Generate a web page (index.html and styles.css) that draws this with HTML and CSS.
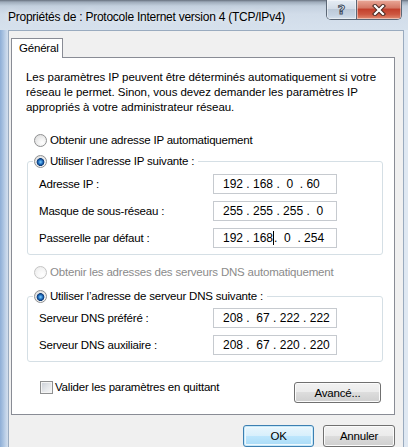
FILE: index.html
```html
<!DOCTYPE html>
<html lang="fr">
<head>
<meta charset="utf-8">
<title>Propriétés de : Protocole Internet version 4 (TCP/IPv4)</title>
<link rel="stylesheet" href="styles.css">
</head>
<body>
<div class="window">
  <div class="titlebar">
    <span class="title">Propriétés de : Protocole Internet version 4 (TCP/IPv4)</span>
    <div class="caption-btns">
      <span class="cap help">?</span>
      <span class="cap close">
        <svg width="16" height="12" viewBox="0 0 16 12">
          <path d="M4 2 L12 10 M12 2 L4 10" stroke="#4a2a22" stroke-width="4.2" stroke-linecap="square" fill="none"/>
          <path d="M4 2 L12 10 M12 2 L4 10" stroke="#ffffff" stroke-width="2.2" stroke-linecap="square" fill="none"/>
        </svg>
      </span>
    </div>
  </div>
  <div class="client">
    <div class="tabs"><div class="tab">Général</div></div>
    <div class="panel">
      <p class="intro">Les paramètres IP peuvent être déterminés automatiquement si votre<br>réseau le permet. Sinon, vous devez demander les paramètres IP<br>appropriés à votre administrateur réseau.</p>

      <div class="radio-row first"><span class="radio"></span>Obtenir une adresse IP automatiquement</div>
      <fieldset class="group">
        <legend><span class="radio checked"></span>Utiliser l’adresse IP suivante :</legend>
        <div class="field-row"><span class="label">Adresse IP :</span><span class="ip">192 . 168 .  0  . 60</span></div>
        <div class="field-row"><span class="label">Masque de sous-réseau :</span><span class="ip">255 . 255 . 255 .  0</span></div>
        <div class="field-row"><span class="label">Passerelle par défaut :</span><span class="ip">192 . 168<span class="caret"></span>.  0  . 254</span></div>
      </fieldset>

      <div class="radio-row second disabled"><span class="radio"></span>Obtenir les adresses des serveurs DNS automatiquement</div>
      <fieldset class="group dns">
        <legend><span class="radio checked"></span>Utiliser l’adresse de serveur DNS suivante :</legend>
        <div class="field-row"><span class="label">Serveur DNS préféré :</span><span class="ip">208 .  67 . 222 . 222</span></div>
        <div class="field-row"><span class="label">Serveur DNS auxiliaire :</span><span class="ip">208 .  67 . 220 . 220</span></div>
      </fieldset>

      <div class="bottom-row">
        <div class="check"><span class="checkbox"></span>Valider les paramètres en quittant</div>
        <span class="btn advanced">Avancé...</span>
      </div>
    </div>
    <div class="dialog-btns">
      <span class="btn default">OK</span>
      <span class="btn">Annuler</span>
    </div>
  </div>
</div>
</body>
</html>
```

FILE: styles.css
```css
html, body {
  margin: 0;
  padding: 0;
}
body {
  width: 408px;
  height: 447px;
  overflow: hidden;
  font-family: "Liberation Sans", Arial, sans-serif;
  font-size: 11.5px;
  letter-spacing: -0.2px;
  color: #000;
}
.window {
  height: 447px;
  display: flex;
  flex-direction: column;
  background: linear-gradient(to right, #8eaed6 0, #a7c1e0 3px, #c4d5ea 6px, #d3dfed 8px, #d9e4f0 60%, #dfe8f2 100%);
}
.titlebar {
  height: 30px;
  flex: 0 0 30px;
  display: flex;
  align-items: flex-start;
  background: linear-gradient(to bottom, #66707d 0, #9eabba 2px, #c3d0de 6px, #d1dce9 14px, #d6e1ed 30px);
}
.title {
  padding: 9px 0 0 8px;
  line-height: 16px;
  font-size: 12px;
  letter-spacing: -0.25px;
  white-space: nowrap;
  color: #000;
  text-shadow: 0 0 6px rgba(255,255,255,0.9);
}
.caption-btns {
  margin: 0 6px 0 auto;
  display: flex;
  height: 20px;
  border: 1px solid #5b6776;
  border-top: none;
  border-radius: 0 0 5px 5px;
  overflow: hidden;
  box-sizing: border-box;
}
.cap {
  display: flex;
  align-items: center;
  justify-content: center;
  height: 19px;
  box-shadow: inset 0 0 0 1px rgba(255,255,255,0.45);
}
.help {
  width: 29px;
  border-right: 1px solid #5b6776;
  background: linear-gradient(to bottom, #e6edf5 0, #d3dce7 45%, #bcc9d8 50%, #c6d3e2 80%, #d6e1ec 100%);
  font-family: "DejaVu Sans", sans-serif;
  font-weight: bold;
  font-size: 13px;
  letter-spacing: 0;
  color: #eef3f8;
  -webkit-text-stroke: 1px #3e4b5d;
}
.close {
  width: 44px;
  background: linear-gradient(to bottom, #eaa999 0, #d57a67 40%, #c3412d 50%, #cd5640 75%, #e18a70 100%);
}
.client {
  flex: 1;
  margin-left: 8px;
  width: 396px;
  box-sizing: border-box;
  border: 1px solid #9aabbf;
  border-bottom: none;
  background: #f0f0f0;
  padding: 7px 8px 0 2px;
}
.tabs {
  display: flex;
}
.tab {
  position: relative;
  z-index: 1;
  box-sizing: border-box;
  width: 52px;
  height: 20px;
  line-height: 19px;
  padding-left: 7px;
  border: 1px solid #898c95;
  border-bottom: none;
  background: #fff;
  margin-bottom: -1px;
  white-space: nowrap;
}
.panel {
  border: 1px solid #898c95;
  background: #fff;
  padding: 12px 11px 11px 14px;
}
.intro {
  margin: 0;
  line-height: 15px;
  letter-spacing: -0.05px;
  white-space: nowrap;
}
.radio-row {
  display: flex;
  align-items: center;
  height: 20px;
  margin-left: 8px;
  white-space: nowrap;
}
.radio-row.first {
  margin-top: 15px;
}
.radio-row.second {
  margin-top: 7px;
}
.radio-row.disabled {
  color: #8b8b8b;
}
.radio {
  flex: 0 0 auto;
  display: inline-block;
  box-sizing: border-box;
  width: 13px;
  height: 13px;
  border-radius: 50%;
  border: 1px solid #8f9091;
  background: radial-gradient(circle at 65% 70%, #ffffff 0, #f2f2f2 35%, #d8d8d8 100%);
  margin-right: 3px;
}
.disabled .radio {
  border-color: #c4c4c4;
  background: radial-gradient(circle at 65% 70%, #ffffff 0, #f7f7f7 40%, #e9e9e9 100%);
}
.radio.checked {
  background:
    radial-gradient(circle at 50% 55%, #7fd0ff 0, #3b8fd8 1.5px, #1a5aa6 2.6px, #0c3a75 3.6px, rgba(12,58,117,0) 4.2px),
    radial-gradient(circle at 65% 70%, #ffffff 0, #f2f2f2 35%, #d8d8d8 100%);
}
.group {
  margin: 3px 0 0 1px;
  padding: 5px 0 6px 5px;
  border: 1px solid #d5dfe5;
  border-radius: 3px;
  min-width: 0;
}
.group.dns {
  margin-top: 6px;
  padding-top: 4px;
}
.group legend {
  display: flex;
  align-items: center;
  height: 16px;
  line-height: 16px;
  padding: 0 4px 0 1px;
  white-space: nowrap;
}
.field-row {
  display: flex;
  align-items: center;
  height: 20px;
  margin-left: 6px;
}
.field-row + .field-row {
  margin-top: 7px;
}
.label {
  flex: 0 0 174px;
  white-space: nowrap;
}
.ip {
  box-sizing: border-box;
  width: 124px;
  height: 20px;
  line-height: 18px;
  border: 1px solid #c6cacf;
  background: #fff;
  padding-left: 9px;
  font-size: 12px;
  letter-spacing: 0;
  white-space: pre;
}
.caret {
  display: inline-block;
  width: 1px;
  height: 14px;
  background: #000;
  vertical-align: -3px;
}
.bottom-row {
  display: flex;
  align-items: flex-start;
  justify-content: space-between;
  margin-top: 15px;
  height: 26px;
}
.check {
  display: flex;
  align-items: center;
  height: 20px;
  margin-left: 14px;
  white-space: nowrap;
}
.checkbox {
  display: inline-block;
  box-sizing: border-box;
  width: 13px;
  height: 13px;
  border: 1px solid #8f9091;
  background: linear-gradient(135deg, #c9ced6 0, #e6e8eb 55%, #f7f7f7 100%);
  box-shadow: inset 0 0 0 1px #f4f4f4;
  margin-right: 2px;
}
.btn {
  display: inline-flex;
  align-items: center;
  justify-content: center;
  box-sizing: border-box;
  height: 22px;
  border: 1px solid #707070;
  border-radius: 3px;
  background: linear-gradient(to bottom, #f2f2f2 0, #ebebeb 50%, #dddddd 50%, #cfcfcf 100%);
  box-shadow: inset 0 0 0 1px #fbfbfb;
  white-space: nowrap;
}
.btn.advanced {
  width: 87px;
  height: 21px;
  margin-top: 5px;
  margin-right: 2px;
}
.dialog-btns {
  display: flex;
  justify-content: flex-end;
  gap: 9px;
  margin-top: 10px;
}
.dialog-btns .btn {
  width: 72px;
}
.btn.default {
  width: 71px;
  border-color: #3c7fb1;
  background: linear-gradient(to bottom, #e9f6fd 0, #d7effc 50%, #bde6fd 50%, #a9dbf6 100%);
  box-shadow: inset 0 0 0 1px #c6e8f9, inset 0 0 0 2px #eef8fd;
}
```
